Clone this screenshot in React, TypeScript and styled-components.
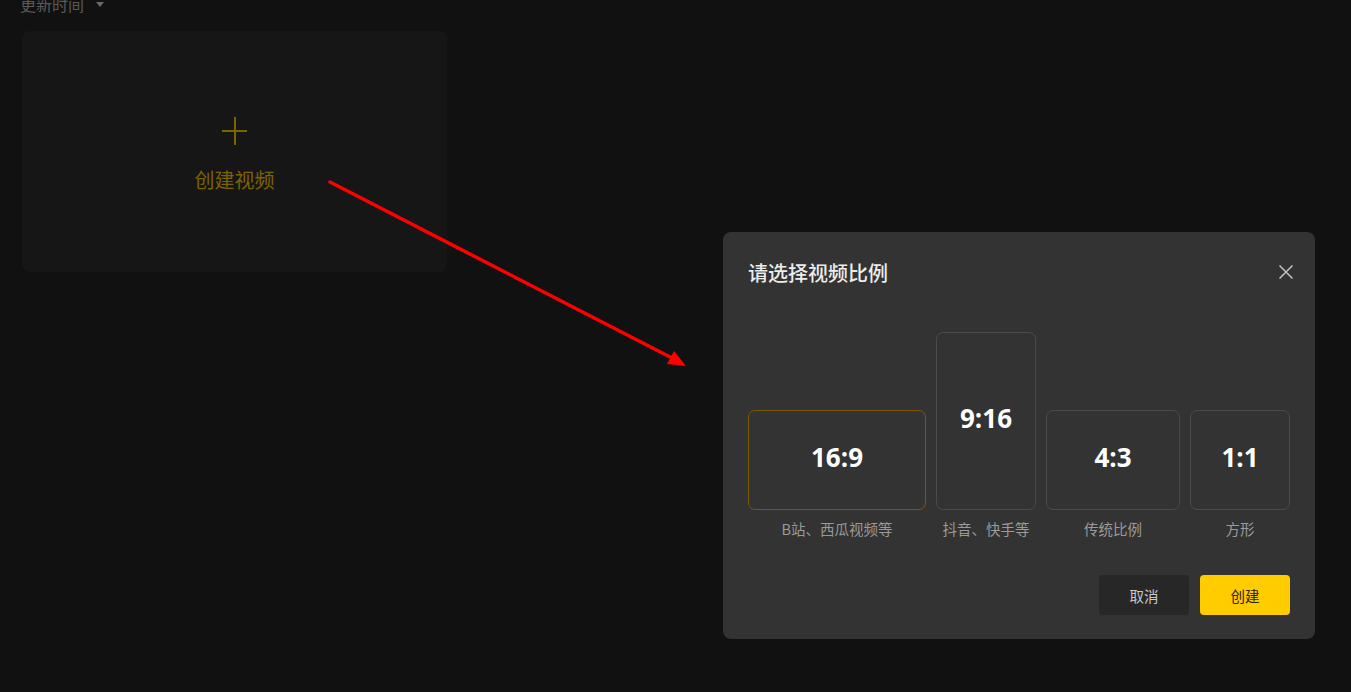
import React from 'react';
import styled, { createGlobalStyle } from 'styled-components';

const GlobalStyle = createGlobalStyle`
  html, body {
    margin: 0;
    padding: 0;
    background: #111111;
    height: 100%;
    overflow: hidden;
  }
  body {
    font-family: "Noto Sans CJK SC", "Noto Sans", sans-serif;
  }
  #root {
    height: 100%;
  }
`;

type Ratio = {
  label: string;
  caption: string;
  w: number;
  h: number;
  active?: boolean;
};

const ratios: Ratio[] = [
  { label: '16:9', caption: 'B站、西瓜视频等', w: 178, h: 100, active: true },
  { label: '9:16', caption: '抖音、快手等', w: 100, h: 178 },
  { label: '4:3', caption: '传统比例', w: 134, h: 100 },
  { label: '1:1', caption: '方形', w: 100, h: 100 },
];

const App: React.FC = () => {
  return (
    <>
      <GlobalStyle />
      <Page>
        <SortRow>
          <span>更新时间</span>
          <Caret />
        </SortRow>
        <CreateCard>
          <svg width="28" height="30" viewBox="0 0 28 30">
            <path d="M14 1 V29 M1 15 H26" stroke="#7d6200" strokeWidth="2" fill="none" />
          </svg>
          <CreateText>创建视频</CreateText>
        </CreateCard>

        <Modal>
          <ModalHead>
            <Title>请选择视频比例</Title>
            <CloseBtn>
              <svg width="16" height="16" viewBox="0 0 16 16">
                <path d="M1.5 1.5 L14.5 14.5 M14.5 1.5 L1.5 14.5" stroke="#bdbdbd" strokeWidth="1.6" />
              </svg>
            </CloseBtn>
          </ModalHead>
          <Options>
            {ratios.map((r) => (
              <Option key={r.label}>
                <BoxSlot>
                  <RatioBox $active={r.active} style={{ width: r.w, height: r.h }}>
                    {r.label}
                  </RatioBox>
                </BoxSlot>
                <Caption>{r.caption}</Caption>
              </Option>
            ))}
          </Options>
          <Footer>
            <Button>取消</Button>
            <Button $primary>创建</Button>
          </Footer>
        </Modal>

        <Arrow width="1351" height="692" viewBox="0 0 1351 692">
          <line x1="330" y1="182" x2="672" y2="358" stroke="#ff0000" strokeWidth="3.5" strokeLinecap="round" />
          <polygon points="686,366 667,364 674,351" fill="#ff0000" />
        </Arrow>
      </Page>
    </>
  );
};

const Page = styled.div`
  position: relative;
  display: flow-root;
  height: 100%;
  padding: 0 22px;
  box-sizing: border-box;
`;

const SortRow = styled.div`
  display: flex;
  align-items: center;
  gap: 12px;
  height: 20px;
  margin-top: -6px;
  margin-left: -2px;
  font-size: 16px;
  line-height: 20px;
  color: #595959;
`;

const Caret = styled.span`
  width: 0;
  height: 0;
  border-left: 4px solid transparent;
  border-right: 4px solid transparent;
  border-top: 5px solid #6a6a6a;
  margin-top: 1px;
`;

const CreateCard = styled.div`
  margin-top: 17px;
  width: 425px;
  height: 241px;
  border-radius: 8px;
  background: #161616;
  display: flex;
  flex-direction: column;
  align-items: center;
  padding-top: 85px;
  box-sizing: border-box;
  gap: 22px;
  svg {
    margin-left: 1px;
  }
`;

const CreateText = styled.div`
  font-size: 20px;
  line-height: 24px;
  color: #7d6200;
`;

const Modal = styled.div`
  position: absolute;
  left: 723px;
  top: 232px;
  width: 592px;
  height: 407px;
  background: #333333;
  border-radius: 8px;
  padding: 0 25px;
  box-sizing: border-box;
  display: flex;
  flex-direction: column;
`;

const ModalHead = styled.div`
  display: flex;
  align-items: center;
  justify-content: space-between;
  height: 80px;
`;

const Title = styled.div`
  font-size: 20px;
  font-weight: 500;
  color: #ececec;
`;

const CloseBtn = styled.div`
  display: flex;
  margin-right: -4px;
`;

const Options = styled.div`
  display: flex;
  gap: 10px;
  margin-top: 20px;
`;

const Option = styled.div`
  display: flex;
  flex-direction: column;
  align-items: center;
`;

const BoxSlot = styled.div`
  height: 178px;
  display: flex;
  align-items: flex-end;
`;

const RatioBox = styled.div<{ $active?: boolean }>`
  box-sizing: border-box;
  border: 1px solid ${(p) => (p.$active ? '#7d5700' : '#4b4b4b')};
  border-radius: 7px;
  display: flex;
  align-items: center;
  justify-content: center;
  padding-bottom: 6px;
  font-family: "Open Sans", "Noto Sans", sans-serif;
  font-weight: 700;
  font-size: 26px;
  color: #ffffff;
`;

const Caption = styled.div`
  margin-top: 9px;
  font-size: 14.5px;
  line-height: 20px;
  color: #9a9a9a;
`;

const Footer = styled.div`
  display: flex;
  justify-content: flex-end;
  gap: 11px;
  margin-top: 36px;
`;

const Button = styled.div<{ $primary?: boolean }>`
  width: 90px;
  height: 40px;
  border-radius: 4px;
  display: flex;
  align-items: center;
  justify-content: center;
  font-size: 14.5px;
  background: ${(p) => (p.$primary ? '#ffcc00' : '#272727')};
  color: ${(p) => (p.$primary ? '#2a2200' : '#c8c8c8')};
`;

const Arrow = styled.svg`
  position: absolute;
  left: 0;
  top: 0;
  pointer-events: none;
`;

export default App;
